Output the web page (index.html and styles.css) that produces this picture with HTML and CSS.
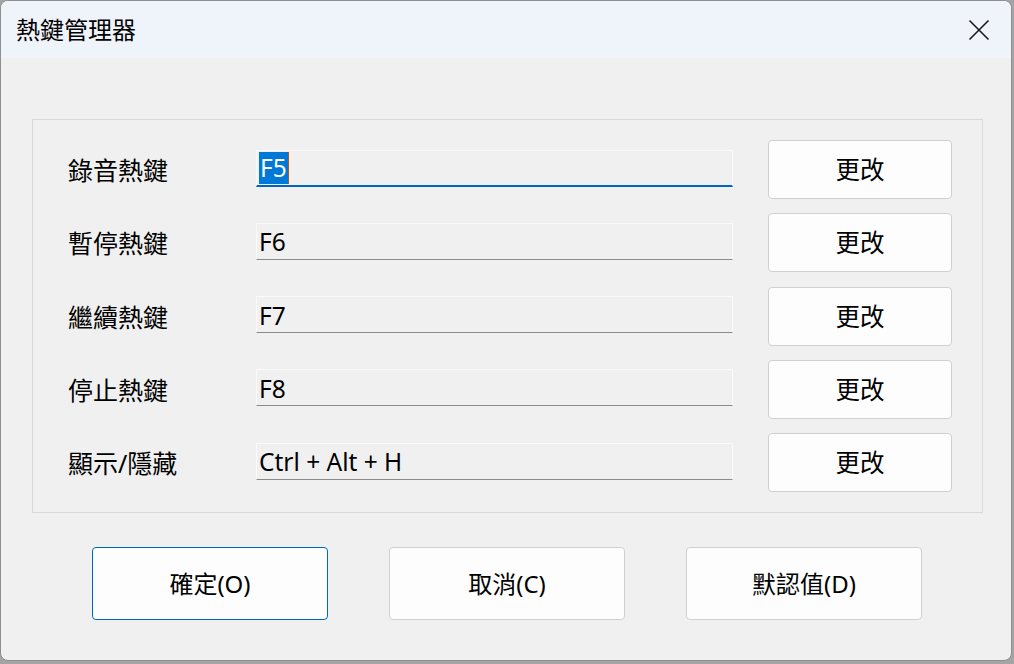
FILE: index.html
```html
<!DOCTYPE html>
<html lang="zh-Hant">
<head>
<meta charset="utf-8">
<title>熱鍵管理器</title>
<link rel="stylesheet" href="styles.css">
</head>
<body>
<div class="window">
  <div class="titlebar">
    <span class="title">熱鍵管理器</span>
    <span class="close">
      <svg width="22" height="22" viewBox="0 0 22 22"><path d="M1.5 1.5 L20.5 20.5 M20.5 1.5 L1.5 20.5" stroke="#1a1a1a" stroke-width="1.6" fill="none"/></svg>
    </span>
  </div>
  <div class="content">
    <div class="group">
      <div class="label">錄音熱鍵</div>
      <div class="field focused"><span class="sel">F5</span><span class="caret"></span></div>
      <div class="btn change">更改</div>

      <div class="label">暫停熱鍵</div>
      <div class="field">F6</div>
      <div class="btn change">更改</div>

      <div class="label">繼續熱鍵</div>
      <div class="field">F7</div>
      <div class="btn change">更改</div>

      <div class="label">停止熱鍵</div>
      <div class="field">F8</div>
      <div class="btn change">更改</div>

      <div class="label">顯示/隱藏</div>
      <div class="field">Ctrl + Alt + H</div>
      <div class="btn change">更改</div>
    </div>
    <div class="actions">
      <div class="btn action default">確定(O)</div>
      <div class="btn action">取消(C)</div>
      <div class="btn action">默認值(D)</div>
    </div>
  </div>
</div>
</body>
</html>
```

FILE: styles.css
```css
html, body {
  margin: 0;
  padding: 0;
}
body {
  width: 1014px;
  height: 664px;
  background: #a4a4a4;
  font-family: "Noto Sans", "Noto Sans CJK TC", sans-serif;
  font-size: 24px;
  color: #000;
  overflow: hidden;
}
.window {
  box-sizing: border-box;
  width: 1012px;
  height: 661px;
  border: 1px solid #8e8e8e;
  border-radius: 8px;
  background: #f0f0f0;
  overflow: hidden;
  display: flex;
  flex-direction: column;
}
.titlebar {
  height: 57px;
  flex: none;
  background: #eff3fa;
  display: flex;
  align-items: center;
  justify-content: space-between;
  padding-left: 15px;
  padding-right: 21px;
}
.title {
  font-size: 24px;
  line-height: 30px;
  color: #000;
}
.close {
  display: flex;
  align-items: center;
  width: 22px;
  height: 22px;
}
.content {
  padding: 61px 0 0 31px;
}
.group {
  box-sizing: border-box;
  width: 951px;
  border: 1px solid #d9d9d9;
  padding: 20px 30px 20px 35px;
  display: grid;
  grid-template-columns: 188px 477px 219px;
  column-gap: 0;
  grid-auto-rows: 59px;
  row-gap: 14.25px;
}
.label {
  align-self: center;
  line-height: 30px;
  font-size: 25px;
  padding-top: 1px;
  white-space: nowrap;
}
.field {
  box-sizing: border-box;
  align-self: start;
  margin-top: 9.5px;
  height: 37px;
  border: 1px solid #e6e6e6;
  border-top-color: #fafafa;
  border-left-color: #fafafa;
  border-right-color: #fafafa;
  border-bottom: 1px solid #8a8a8a;
  background: #f0f0f0;
  padding: 1px 0 0 2px;
  line-height: 35px;
  font-size: 24.5px;
  white-space: nowrap;
  display: flex;
  align-items: center;
}
.field.focused {
  border-bottom: 2px solid #0067c0;
  align-items: flex-start;
  padding-top: 1px;
}
.sel {
  background: #0078d7;
  color: #fff;
  line-height: 32px;
  padding: 0 1px;
}
.caret {
  width: 1px;
  height: 32px;
  background: #b2581c;
}
.btn {
  box-sizing: border-box;
  background: #fdfdfd;
  border: 1px solid #d0d0d0;
  border-radius: 4px;
  display: flex;
  align-items: center;
  justify-content: center;
  line-height: 30px;
  white-space: nowrap;
}
.change {
  justify-self: end;
  width: 184px;
  height: 59px;
  font-size: 24.5px;
  padding-top: 1px;
}
.actions {
  display: flex;
  gap: 61px;
  margin-top: 34px;
  padding-left: 60px;
}
.action {
  width: 236px;
  height: 73px;
  font-size: 24px;
  padding-top: 1px;
}
.action.default {
  border-color: #0067c0;
}
```
